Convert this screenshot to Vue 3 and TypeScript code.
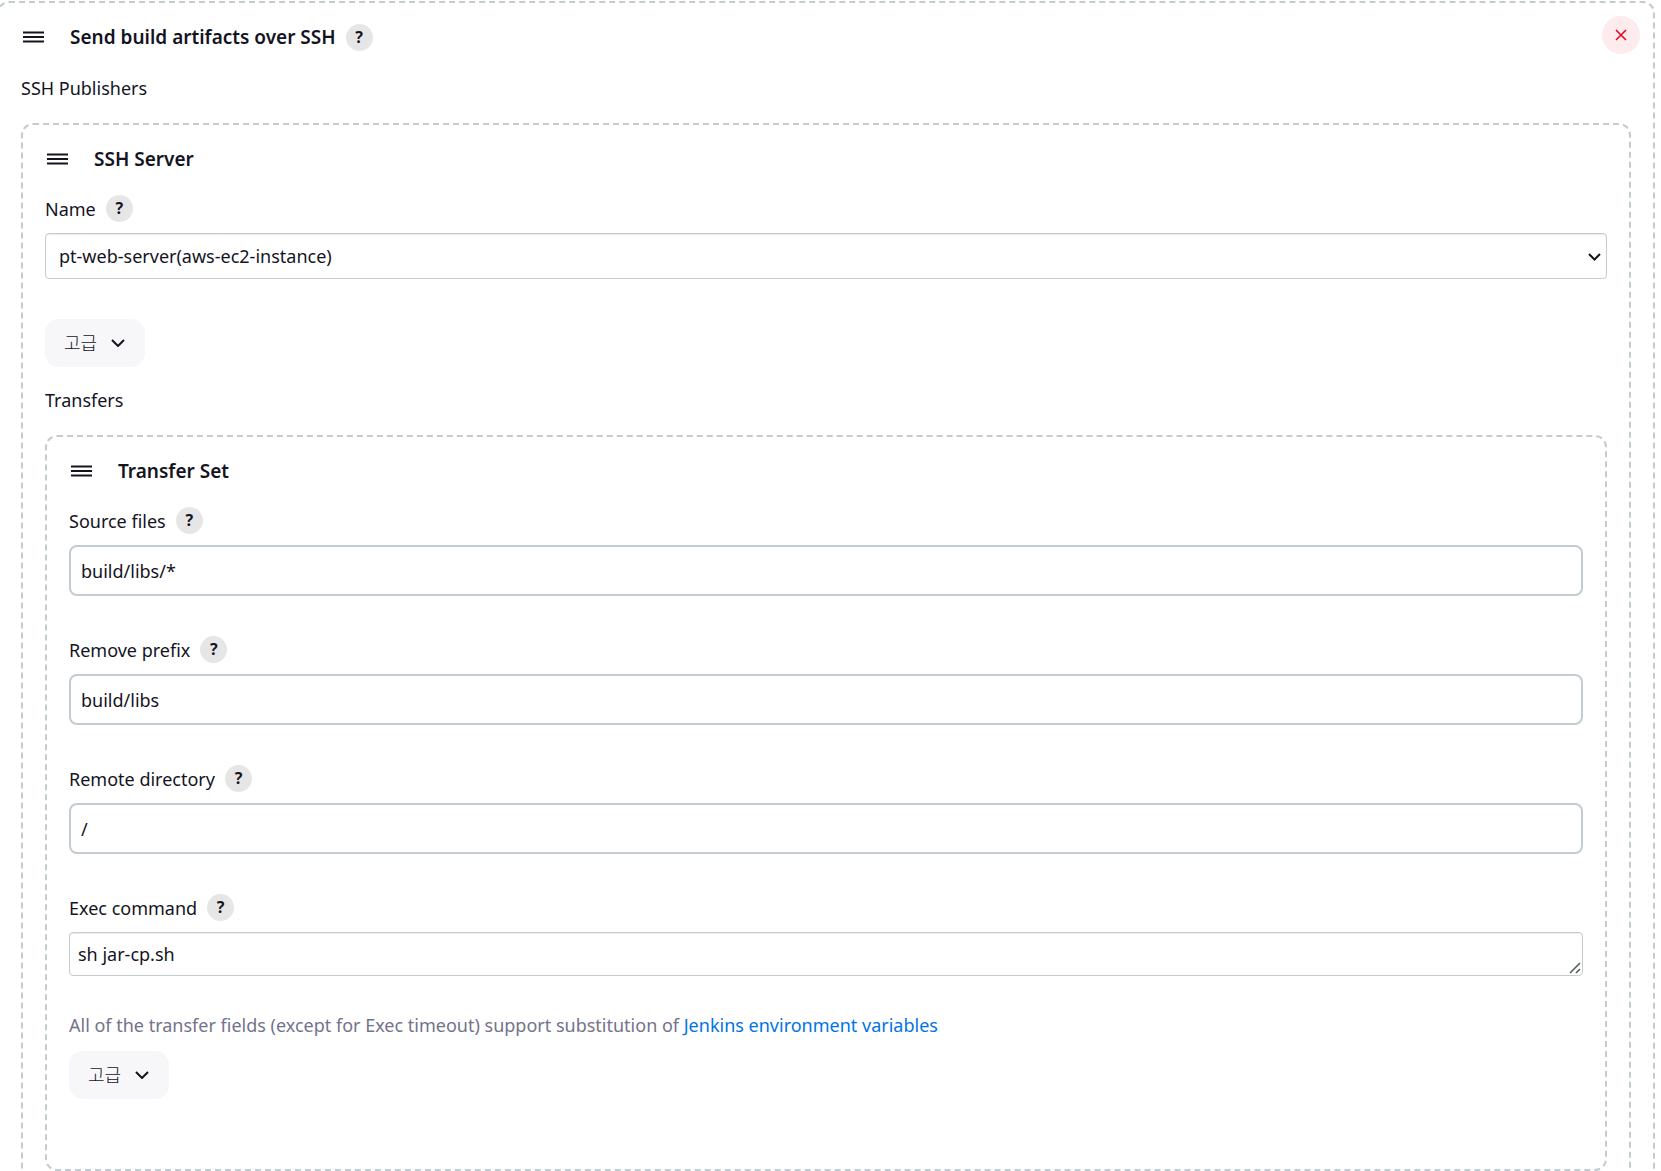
<script setup lang="ts">
import { reactive, ref } from 'vue'

interface TransferField {
  id: string
  label: string
  value: string
}

const server = ref('pt-web-server(aws-ec2-instance)')
const servers = ['pt-web-server(aws-ec2-instance)']

const fields = reactive<TransferField[]>([
  { id: 'source-files', label: 'Source files', value: 'build/libs/*' },
  { id: 'remove-prefix', label: 'Remove prefix', value: 'build/libs' },
  { id: 'remote-directory', label: 'Remote directory', value: '/' },
])

const command = ref('sh jar-cp.sh')
</script>

<template>
  <main class="page">
    <section class="chunk chunk--outer">
      <header class="chunk-header">
        <svg class="handle" viewBox="0 0 21 12" aria-hidden="true">
          <path d="M0 1.5h21M0 6h21M0 10.5h21" />
        </svg>
        <h2 class="title">Send build artifacts over SSH</h2>
        <button type="button" class="help">?</button>
        <button type="button" class="close" aria-label="Delete">
          <svg viewBox="0 0 12 12" aria-hidden="true"><path d="M1 1l10 10M11 1L1 11" /></svg>
        </button>
      </header>
      <p class="section-label">SSH Publishers</p>

      <section class="chunk">
        <header class="chunk-header">
          <svg class="handle" viewBox="0 0 21 12" aria-hidden="true">
            <path d="M0 1.5h21M0 6h21M0 10.5h21" />
          </svg>
          <h3 class="title">SSH Server</h3>
        </header>

        <div class="field">
          <div class="field-label">
            <label for="server-name">Name</label>
            <button type="button" class="help">?</button>
          </div>
          <div class="control">
            <select id="server-name" v-model="server" class="select">
              <option v-for="s in servers" :key="s" :value="s">{{ s }}</option>
            </select>
            <svg class="select-arrow" viewBox="0 0 13 8" aria-hidden="true">
              <path d="M1 1l5.5 5.5L12 1" />
            </svg>
          </div>
        </div>

        <button type="button" class="advanced">
          고급
          <svg viewBox="0 0 14 8" aria-hidden="true"><path d="M1 1l6 6 6-6" /></svg>
        </button>
        <p class="section-label section-label--spaced">Transfers</p>

        <section class="chunk chunk--transfer">
          <header class="chunk-header">
            <svg class="handle" viewBox="0 0 21 12" aria-hidden="true">
              <path d="M0 1.5h21M0 6h21M0 10.5h21" />
            </svg>
            <h4 class="title">Transfer Set</h4>
          </header>

          <div v-for="f in fields" :key="f.id" class="field">
            <div class="field-label">
              <label :for="f.id">{{ f.label }}</label>
              <button type="button" class="help">?</button>
            </div>
            <input :id="f.id" v-model="f.value" type="text" class="input" />
          </div>

          <div class="field field--command">
            <div class="field-label">
              <label for="exec-command">Exec command</label>
              <button type="button" class="help">?</button>
            </div>
            <div class="control">
              <textarea id="exec-command" v-model="command" class="textarea" rows="1"></textarea>
              <svg class="grip" viewBox="0 0 12 12" aria-hidden="true">
                <path d="M1 11L11 1M7 11l4-4" />
              </svg>
            </div>
          </div>

          <p class="note">
            All of the transfer fields (except for Exec timeout) support substitution of
            <a href="#">Jenkins environment variables</a>
          </p>
          <button type="button" class="advanced">
            고급
            <svg viewBox="0 0 14 8" aria-hidden="true"><path d="M1 1l6 6 6-6" /></svg>
          </button>
        </section>
      </section>
    </section>
  </main>
</template>

<style>
body {
  margin: 0;
  background: #fff;
}
</style>

<style scoped>
.page {
  height: 100vh;
  overflow: hidden;
  color: #14141f;
  font: 18px/27px "Noto Sans", "Noto Sans CJK KR", sans-serif;
}

.page * {
  box-sizing: border-box;
}

button,
input,
select,
textarea {
  margin: 0;
  color: inherit;
  font: inherit;
}

svg {
  display: block;
  fill: none;
  stroke: currentColor;
}

.chunk {
  padding: 13px 22px 24px;
  border: 2px dashed #c3ccd1;
  border-radius: 12px;
}

.chunk--outer {
  margin: 1px 6px 0 -3px;
}

.chunk--transfer {
  padding-bottom: 70px;
}

.chunk-header {
  display: flex;
  align-items: center;
  height: 42px;
  margin-bottom: 15px;
}

.handle {
  width: 21px;
  height: 12px;
  margin: 0 26px 0 2px;
  stroke-width: 2;
}

.title {
  margin: 0;
  font-size: 19px;
  font-weight: 600;
}

.help {
  width: 27px;
  height: 27px;
  margin-left: 10px;
  padding: 0;
  border: 0;
  border-radius: 50%;
  background: #e6e6e6;
  font-size: 16px;
  font-weight: 700;
  line-height: 27px;
}

.close {
  display: flex;
  align-items: center;
  justify-content: center;
  align-self: flex-start;
  width: 38px;
  height: 38px;
  margin: 0 -9px 0 auto;
  padding: 0;
  border: 0;
  border-radius: 50%;
  background: #fdebed;
  color: #e6001f;
}

.close svg {
  width: 12px;
  height: 12px;
  stroke-width: 1.5;
}

.section-label {
  margin: 17px 0 21px;
}

.section-label--spaced {
  margin-top: 20px;
}

.field {
  margin-bottom: 40px;
}

.field--command {
  margin-bottom: 36px;
}

.field-label {
  display: flex;
  align-items: center;
  height: 27px;
  margin-bottom: 11px;
}

.field-label label {
  padding-top: 2px;
}

.control {
  position: relative;
}

.select,
.input,
.textarea {
  display: block;
  width: 100%;
  background: #fff;
}

.select {
  height: 46px;
  padding: 0 32px 0 13px;
  border: 1px solid #c3ccd1;
  border-radius: 4px;
  box-shadow: inset 0 1px 1px rgba(0, 0, 0, 0.08);
  appearance: none;
}

.select-arrow {
  position: absolute;
  top: 20px;
  right: 6px;
  width: 13px;
  height: 8px;
  stroke-width: 2;
  pointer-events: none;
}

.input {
  height: 51px;
  padding: 0 10px;
  border: 2px solid #c3ccd1;
  border-radius: 8px;
}

.textarea {
  height: 44px;
  padding: 8px;
  border: 1px solid #c3ccd1;
  border-radius: 4px;
  box-shadow: inset 0 1px 1px rgba(0, 0, 0, 0.08);
  overflow: hidden;
  resize: both;
}

.textarea::-webkit-resizer {
  background: transparent;
}

.grip {
  position: absolute;
  right: 2px;
  bottom: 2px;
  width: 12px;
  height: 12px;
  color: #555;
  stroke-width: 1.5;
  pointer-events: none;
}

.advanced {
  display: flex;
  align-items: center;
  gap: 14px;
  height: 48px;
  padding: 0 20px 0 19px;
  border: 0;
  border-radius: 14px;
  background: #f7f7fa;
  font-weight: 300;
}

.advanced svg {
  width: 14px;
  height: 8px;
  stroke-width: 2;
}

.note {
  margin: 0 0 12px;
  color: #73738c;
}

.note a {
  color: #0073e6;
  text-decoration: none;
}
</style>
